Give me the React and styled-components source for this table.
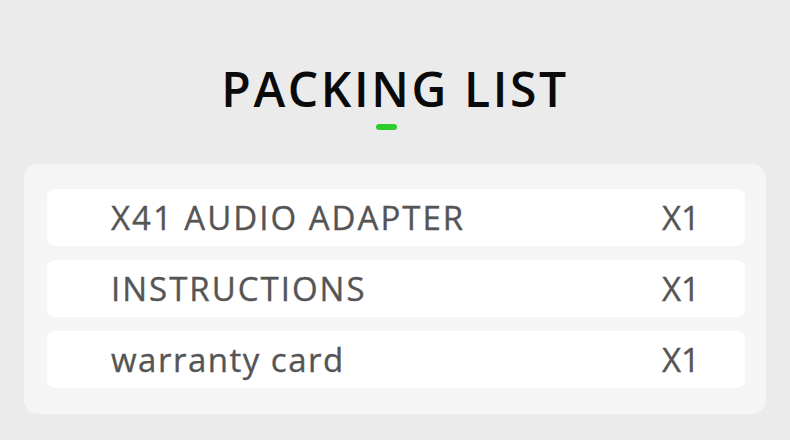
import React from "react";
import styled, { createGlobalStyle } from "styled-components";

const GlobalStyle = createGlobalStyle`
  html, body {
    margin: 0;
    padding: 0;
    background: #ebebeb;
  }
  body {
    font-family: "Open Sans", "Noto Sans", sans-serif;
  }
`;

const Page = styled.div`
  width: 790px;
  height: 440px;
  box-sizing: border-box;
  padding: 56px 24px 0;
  display: flex;
  flex-direction: column;
  align-items: center;
`;

const Title = styled.h1`
  margin: 0;
  font-size: 48px;
  line-height: 66px;
  font-weight: 600;
  letter-spacing: 2.6px;
  color: #0a0a0a;
`;

const Accent = styled.div`
  width: 21px;
  height: 6px;
  border-radius: 3px;
  background: #2ecc2e;
  margin: 2px 17px 0 0;
`;

const Panel = styled.div`
  width: 100%;
  box-sizing: border-box;
  margin-top: 34px;
  padding: 25px 21px 26px 23px;
  background: #f5f5f5;
  border-radius: 14px;
  display: flex;
  flex-direction: column;
  gap: 14px;
`;

const Row = styled.div`
  height: 57px;
  border-radius: 8px;
  background: #ffffff;
  display: flex;
  align-items: center;
  justify-content: space-between;
  padding: 0 45px 0 64px;
  color: #555555;
  font-size: 33px;
  -webkit-text-stroke: 0.35px #555555;
  letter-spacing: ${({ $spaced }) => ($spaced ? "2px" : "1.5px")};
`;

const Qty = styled.span`
  letter-spacing: 0;
`;

const items = [
  { name: "X41 AUDIO ADAPTER", spaced: true },
  { name: "INSTRUCTIONS", spaced: true },
  { name: "warranty card", spaced: false },
];

export default function App() {
  return (
    <Page>
      <GlobalStyle />
      <Title>PACKING LIST</Title>
      <Accent />
      <Panel>
        {items.map((item) => (
          <Row key={item.name} $spaced={item.spaced}>
            <span>{item.name}</span>
            <Qty>X1</Qty>
          </Row>
        ))}
      </Panel>
    </Page>
  );
}
